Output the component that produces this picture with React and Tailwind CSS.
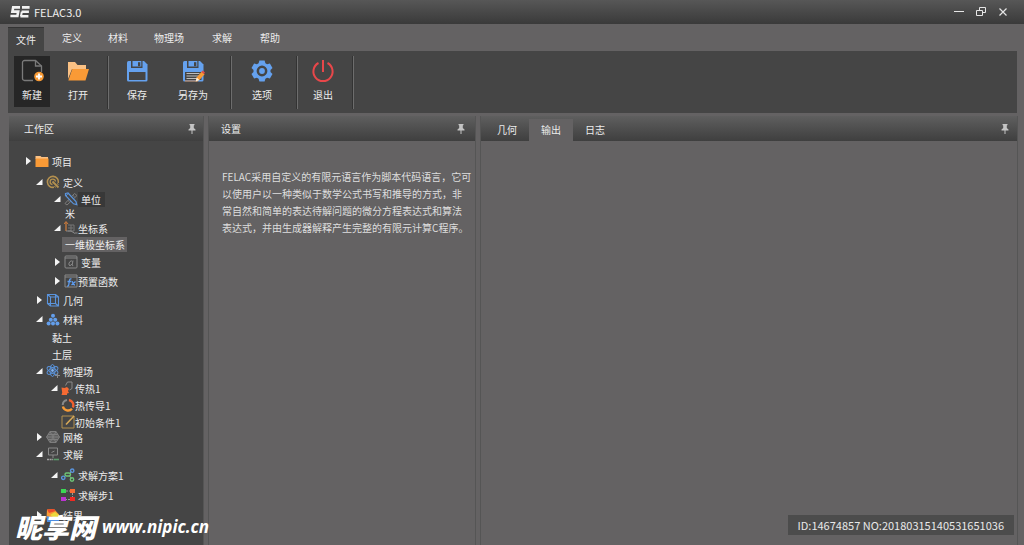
import { useState } from 'react';

/* ---------- Window chrome ---------- */

const Logo = () => (
  <svg viewBox="0 0 20 12" className="h-3 w-5" fill="none" stroke="#f2f2f2" strokeWidth="2.6">
    <path d="M10 1.4H3.2L2.4 5.6h5.8L7.4 10H0.4" />
    <path d="M19.6 1.4H12M18.9 5.8H11.6M18.4 10.2H10.4" />
    <path d="M11.8 5.8l-.8 4.4" strokeWidth="2" />
  </svg>
);

const TitleBar = () => (
  <header className="flex h-6 shrink-0 items-center bg-linear-to-b from-[#575757] to-[#3a3a3a] pr-4 pl-2.5">
    <Logo />
    <h1 className="ml-1 text-[11px] text-[#f0f0f0]">FELAC3.0</h1>
    <div className="ml-auto flex items-center gap-3">
      <button type="button" aria-label="最小化">
        <svg viewBox="0 0 10 10" className="size-2.5" stroke="#e6e6e6" fill="none">
          <path d="M0 4.5h10" />
        </svg>
      </button>
      <button type="button" aria-label="还原">
        <svg viewBox="0 0 10 10" className="size-2.5" stroke="#e6e6e6" fill="none">
          <path d="M3.5 3V.5h6v5H7M.5 3.5h6v5h-6z" />
        </svg>
      </button>
      <button type="button" aria-label="关闭">
        <svg viewBox="0 0 10 10" className="size-2.5" stroke="#e6e6e6" strokeWidth="1.2" fill="none">
          <path d="M1.5 1.5l7 7M8.5 1.5l-7 7" />
        </svg>
      </button>
    </div>
  </header>
);

/* ---------- Ribbon ---------- */

const NewFileIcon = () => (
  <svg viewBox="0 0 24 24" className="size-6" fill="none">
    <path d="M13 21.5H4.500a2 2 0 0 1-2-2v-16a2 2 0 0 1 2-2h11l6 5.500v6" stroke="#7a7a7a" strokeWidth="1.300" />
    <path d="M15.500 1.500v5.500h6" stroke="#7a7a7a" strokeWidth="1.300" />
    <circle cx="19" cy="17.500" r="4.800" fill="#f79a35" />
    <path d="M19 14.500v6M16 17.500h6" stroke="#fff" strokeWidth="1.800" />
  </svg>
);

const OpenIcon = () => (
  <svg viewBox="0 0 24 24" className="size-6">
    <path d="M2 20V3h7l2.500 3H20v4H6z" fill="#fbc184" />
    <path d="M6.300 10H23l-3.500 11.500H2.300z" fill="#f99a36" />
  </svg>
);

const Floppy = ({ children }) => (
  <svg viewBox="0 0 24 24" className="size-6" fill="none">
    <path d="M3.500 2h15.500l3.500 3.500v15.500a1.500 1.500 0 0 1-1.500 1.500H3.500A1.500 1.500 0 0 1 2 21V3.500A1.500 1.500 0 0 1 3.500 2z" fill="#65a1ee" />
    <path d="M6 2h11.500v7H6z" fill="#454545" />
    <path d="M7.500 2h8.800v5.500H7.500z" fill="#65a1ee" />
    <path d="M13 3.200h2.300v4H13z" fill="#454545" />
    <path d="M4 13h16.500v8H4z" fill="#454545" />
    {children}
  </svg>
);

const SaveAsIcon = () => (
  <Floppy>
    <path d="M5.500 14.500h13M5.500 17h13M5.500 19.500h13" stroke="#bdbdbd" strokeWidth="1.200" />
    <path d="M4 22h13" stroke="#b77c4b" strokeWidth="1.200" />
    <path d="M14.800 22.500l.8-4 5-5.800 3 2.500-5.200 5.800z" fill="#f79a35" />
    <path d="M20.300 13l1.400-1.600 2.300 2-1.200 1.700z" fill="#e64b43" />
    <path d="M14.800 22.500l.8-4 2.800 2.500z" fill="#fff1dc" />
  </Floppy>
);

const GearIcon = () => (
  <svg viewBox="0 0 24 24" className="size-6" fill="#65a1ee">
    <path
      fillRule="evenodd"
      d="M9.400 1.500h5.200l.8 2.700 1.700 1 2.800-.7 2.600 4.400-2 2v2.200l2 2-2.600 4.400-2.800-.7-1.700 1-.8 2.700H9.400l-.8-2.700-1.700-1-2.800.7-2.600-4.400 2-2v-2.200l-2-2 2.600-4.400 2.800.7 1.700-1zM12 6.600a5.400 5.400 0 1 0 0 10.800 5.400 5.400 0 0 0 0-10.800z"
    />
    <circle cx="12" cy="12" r="2.900" />
  </svg>
);

const PowerIcon = () => (
  <svg viewBox="0 0 24 24" className="size-6" fill="none" stroke="#e8474a" strokeWidth="2">
    <path d="M7.500 4a9.600 9.600 0 1 0 9 0M12 1v12" />
  </svg>
);

const MENU = ['文件', '定义', '材料', '物理场', '求解', '帮助'];

const MenuTabs = () => {
  const [active, setActive] = useState('文件');

  return (
    <nav className="flex h-[27px] shrink-0 items-end gap-2.5 px-2">
      {MENU.map((name) => (
        <button
          key={name}
          type="button"
          onClick={() => setActive(name)}
          className={`h-6 px-2 ${
            active === name ? 'border-t border-[#333] bg-[#454545]' : 'border-t border-transparent pb-1'
          } ${name === '求解' ? 'mx-0.5' : ''}`}
        >
          {name}
        </button>
      ))}
    </nav>
  );
};

const Tool = ({ label, icon, active }) => (
  <button
    type="button"
    className={`flex h-[51px] min-w-9 flex-col items-center gap-1 pt-[3px] ${active ? 'bg-[#262626]' : ''}`}
  >
    {icon}
    <span>{label}</span>
  </button>
);

const Divider = () => <span className="h-[53px] w-0.5 border-l border-[#333] bg-[#6d6d6d]" />;

const Ribbon = () => (
  <div className="mr-[7px] ml-2 flex h-[62px] shrink-0 items-start bg-[#454545] pt-[5px] pl-1.5">
    <div className="flex gap-2.5">
      <Tool label="新建" icon={<NewFileIcon />} active />
      <Tool label="打开" icon={<OpenIcon />} />
    </div>
    <div className="ml-[11px] flex gap-2.5">
      <Divider />
      <div className="flex gap-5">
        <Tool label="保存" icon={<Floppy />} />
        <Tool label="另存为" icon={<SaveAsIcon />} />
      </div>
    </div>
    <div className="ml-[19px] flex gap-3">
      <Divider />
      <Tool label="选项" icon={<GearIcon />} />
    </div>
    <div className="ml-4 flex gap-[7px]">
      <Divider />
      <Tool label="退出" icon={<PowerIcon />} />
    </div>
    <div className="ml-[11px] flex">
      <Divider />
    </div>
  </div>
);

/* ---------- Panels ---------- */

const Pin = () => (
  <button type="button" aria-label="固定" className="ml-auto">
    <svg viewBox="0 0 8 10" className="h-2.5 w-2" fill="#c4c4c4">
      <path d="M1.500 0h5v1L5.800 1.500v2.500L7.500 5.500V6.500H.5V5.500L2.200 4V1.500L1.500 1zM3.500 6.500h1V10h-1z" />
    </svg>
  </button>
);

const PanelHeader = ({ children }) => (
  <div className="flex h-[25px] shrink-0 items-center bg-linear-to-b from-[#5f5f5f] to-[#3f3f3f]">
    {children}
    <Pin />
  </div>
);

/* ---------- Tree icons, all on a 14px grid ---------- */

const Svg = ({ children }) => (
  <svg viewBox="0 0 14 14" className="size-3.5 shrink-0" fill="none">
    {children}
  </svg>
);

const ICONS = {
  folder: (
    <Svg>
      <path d="M.5 3V2h5l1 1h6.500v2H.5z" fill="#fbc184" />
      <path d="M.5 4.500h13V13H.5z" fill="#f99a36" />
    </Svg>
  ),
  define: (
    <Svg>
      <path d="M8 12.300A5.500 5.500 0 1 1 12.300 8" stroke="#b3904f" strokeWidth="1.600" />
      <path d="M6.500 9.500A2.700 2.700 0 1 1 9.500 6.500" stroke="#b3904f" strokeWidth="1.300" />
      <path d="M6.500 6.500l6 6" stroke="#b3904f" strokeWidth="1.800" />
      <path d="M11 8.500l1.500 1M8.500 11l1 1.500" stroke="#b3904f" />
    </Svg>
  ),
  unit: (
    <Svg>
      <path d="M1 11.500l9.500-10 2.500 2-10 9.500z" stroke="#7c7c7c" />
      <path d="M4 8.500l1.500 1.300M9 3.500l1.500 1.300" stroke="#7c7c7c" />
      <path d="M1.500 1.500l2.500-.5 8 8.500.8 3.200-3.300-.9-8-8.300z" fill="#454545" stroke="#5a94dd" strokeWidth="1.200" />
      <path d="M4 1.500L2 4" stroke="#5a94dd" />
    </Svg>
  ),
  axes: (
    <Svg>
      <path d="M4 4h6v6H4M7 4v6M4 7h5" stroke="#777" />
      <path d="M2 1v9" stroke="#c97a3c" strokeWidth="1.300" />
      <path d="M0 3l2-2.500L4 3" stroke="#c97a3c" />
      <path d="M2 10h5l4 2.500M11 12h2.500" stroke="#8a8a8a" />
    </Svg>
  ),
  variable: (
    <Svg>
      <rect x="1" y="1" width="12" height="12" rx="1" stroke="#8a8a8a" />
      <path d="M1 3h12" stroke="#8a8a8a" />
      <path d="M9 5.500L8.200 10q0 1 1 .5M8.700 7Q7.500 5 6 6.500t-1 3.500 3-1" stroke="#8a8a8a" />
    </Svg>
  ),
  func: (
    <Svg>
      <path d="M1 13V1h12v12z" stroke="#8a8a8a" />
      <path d="M1 3h12" stroke="#8a8a8a" />
      <path d="M7.500 5q-1.700-.7-2 1.500l-.8 4.500q-.3 1.500-1.700 1M3.500 7.500H7M7.500 7.500q1.200 0 1.500 1.700t2 1.800M11.500 7.500l-4 3.500" stroke="#5e9df0" strokeWidth="1.300" />
    </Svg>
  ),
  cube: (
    <Svg>
      <path d="M1.500 1.500h8v9h-8zM4.500 4h8v9h-8zM1.500 1.500l3 2.500M9.500 1.500l3 2.500M9.500 10.500l3 2.500M1.500 10.500l3 2.500" stroke="#5a94dd" strokeWidth="1.100" />
    </Svg>
  ),
  balls: (
    <Svg>
      <g fill="#639eeb">
        <circle cx="7" cy="3.800" r="2" />
        <circle cx="4.800" cy="7.700" r="2" />
        <circle cx="9.200" cy="7.700" r="2" />
        <circle cx="2.600" cy="11.600" r="2" />
        <circle cx="7" cy="11.600" r="2" />
        <circle cx="11.400" cy="11.600" r="2" />
      </g>
    </Svg>
  ),
  atom: (
    <Svg>
      <g stroke="#5a94dd">
        <ellipse cx="6.500" cy="6.500" rx="6" ry="2.500" transform="rotate(30 6.500 6.500)" />
        <ellipse cx="6.500" cy="6.500" rx="6" ry="2.500" transform="rotate(90 6.500 6.500)" />
        <ellipse cx="6.500" cy="6.500" rx="6" ry="2.500" transform="rotate(150 6.500 6.500)" />
      </g>
      <circle cx="6.500" cy="6.500" r="1.400" fill="#7db2f5" />
      <path d="M11.500 9v5M9 11.500h5" stroke="#8a8a8a" />
    </Svg>
  ),
  heat: (
    <Svg>
      <path d="M4.500 4.500l2-3.500H11v6.500L8.500 9" stroke="#8a8a8a" />
      <path d="M.5 6.500l3 .5 2.500-1 2 2-1 2 1 2-2 .5V14H.5l.7-2.500z" fill="#f56a33" />
    </Svg>
  ),
  ring: (
    <Svg>
      <path d="M6 2A5.300 5.300 0 0 0 1.700 7" stroke="#8a8a8a" strokeWidth="2" />
      <path d="M8 2A5.300 5.300 0 0 1 11.800 9.500" stroke="#f2602f" strokeWidth="2.400" />
      <path d="M11 10.700A5.300 5.300 0 0 1 1.900 8.500" stroke="#f79a35" strokeWidth="2.400" />
    </Svg>
  ),
  edit: (
    <Svg>
      <path d="M1 1h12v12H1z" stroke="#b3904f" />
      <path d="M5 9.500l8-8.500" stroke="#d9aa58" strokeWidth="1.500" />
    </Svg>
  ),
  mesh: (
    <Svg>
      <path d="M4 1.500h6l3.500 5.500-3.500 5.500H4L.5 7z" fill="#606060" stroke="#7e7e7e" />
      <path d="M.5 7h13M4 1.500l6 11M10 1.500l-6 11M2 4.500h10M2 9.500h10" stroke="#7e7e7e" />
    </Svg>
  ),
  solve: (
    <Svg>
      <path d="M2.500 1h9v7h-9zM7 8v3M5.500 5.500L8.500 4" stroke="#8a8a8a" />
      <path d="M1 12.500h6" stroke="#a5a5a5" strokeWidth="1.600" strokeDasharray="2 .6" />
      <path d="M7.500 12.500H13" stroke="#5d9b6b" strokeWidth="1.600" />
    </Svg>
  ),
  scheme: (
    <Svg>
      <path d="M3 9l2-2M9 5l1.500-1.500M8.500 8l2 2.500" stroke="#999" />
      <circle cx="11.200" cy="2.700" r="1.700" stroke="#5a94dd" strokeWidth="1.400" />
      <circle cx="2.300" cy="9.800" r="1.700" stroke="#5a94dd" strokeWidth="1.400" />
      <rect x="4" y="5" width="5.500" height="3" rx="1.500" stroke="#6dc476" strokeWidth="1.400" />
      <circle cx="11" cy="11.500" r="1.700" stroke="#6dc476" strokeWidth="1.400" />
    </Svg>
  ),
  step: (
    <Svg>
      <path d="M5 3h4M11.500 5v4M9 11.500H5" stroke="#999" strokeDasharray="2 1" />
      <path d="M0 1h5v4H0z" fill="#3bd755" />
      <path d="M9 1h5v4H9z" fill="#f56a33" />
      <path d="M0 9h5v4H0z" fill="#bb33d2" />
      <path d="M9 9h5v4H9z" fill="#ee2a22" />
    </Svg>
  ),
  result: (
    <Svg>
      <path d="M1 1.500L8 1l5 5.500V13L5.500 9.500.5 10z" fill="#f79a35" />
      <path d="M1 1.500L8 1l1.500 2L3 5z" fill="#ec4a2b" />
      <path d="M4 7l5-3 4 3v3L7 9z" fill="#ecd83c" />
      <path d="M.5 8l4 1 8.500 3v2H1z" fill="#4e8de0" />
    </Svg>
  ),
};

const Arrow = ({ open }) => (
  <svg viewBox="0 0 7 8" className="h-2 w-[7px] shrink-0" fill="#f4f4f4">
    {open ? <path d="M6.500 1v6H0z" /> : <path d="M1 0l5 4-5 4z" />}
  </svg>
);

// open: true / false draws the arrow, undefined leaves its place empty
const TREE = [
  { label: '项目', icon: 'folder', open: false, row: 'h-[22px] pl-4' },
  { label: '定义', icon: 'define', open: true, row: 'h-5 pl-[27px]' },
  { label: '单位', icon: 'unit', open: true, row: 'h-3.5 pl-[45px]', mark: 'bg-[#383838] pr-1' },
  { label: '米', row: 'h-3.5 pl-[53px]' },
  { label: '坐标系', icon: 'axes', open: true, row: 'h-4 pl-[45px]', tight: true },
  { label: '一维极坐标系', row: 'h-4 pl-[53px]', mark: 'bg-[#646263] pr-0.5' },
  { label: '变量', icon: 'variable', open: false, row: 'h-5 pl-[45px]' },
  { label: '预置函数', icon: 'func', open: false, row: 'h-[18px] pl-[45px]', tight: true },
  { label: '几何', icon: 'cube', open: false, row: 'h-5 pl-[27px]' },
  { label: '材料', icon: 'balls', open: true, row: 'h-[18px] pl-[27px]' },
  { label: '黏土', row: 'h-[18px] pl-[40px]' },
  { label: '土层', row: 'h-4 pl-[40px]' },
  { label: '物理场', icon: 'atom', open: true, row: 'h-[18px] pl-[27px]' },
  { label: '传热1', icon: 'heat', open: true, row: 'h-4 pl-[42px]', tight: true },
  { label: '热传导1', icon: 'ring', row: 'h-[18px] pl-[42px]', tight: true },
  { label: '初始条件1', icon: 'edit', row: 'h-4 pl-[42px]', tight: true },
  { label: '网格', icon: 'mesh', open: false, row: 'h-3.5 pl-[27px]' },
  { label: '求解', icon: 'solve', open: true, row: 'h-5 pl-[27px]' },
  { label: '求解方案1', icon: 'scheme', open: true, row: 'h-[22px] pl-[42px]' },
  { label: '求解步1', icon: 'step', row: 'h-[18px] pl-[42px]' },
  { label: '结果', icon: 'result', open: false, row: 'h-[22px] pl-[27px]' },
];

const TreeRow = ({ label, icon, open, row, mark = '', tight }) => (
  <li className={`flex items-center ${row}`}>
    {icon && (
      <span className="flex items-center gap-[3px]">
        {open === undefined ? <span className="w-[7px]" /> : <Arrow open={open} />}
        {ICONS[icon]}
      </span>
    )}
    <span className={`leading-[15px] ${tight ? '' : 'pl-[3px]'} ${mark}`}>{label}</span>
  </li>
);

const Workspace = () => (
  <aside className="flex w-[195px] shrink-0 flex-col border-r border-[#555] bg-[#454545]">
    <PanelHeader>
      <h2 className="pl-[15px]">工作区</h2>
      <span className="order-last w-[7px]" />
    </PanelHeader>
    <ul className="pt-[9px]">
      {TREE.map((node) => (
        <TreeRow key={node.label + node.row} {...node} />
      ))}
    </ul>
  </aside>
);

const Settings = () => (
  <section className="flex w-[268px] shrink-0 flex-col border-x border-[#555]">
    <PanelHeader>
      <h2 className="pl-3">设置</h2>
      <span className="order-last w-2.5" />
    </PanelHeader>
    <p className="pt-[27px] pl-[13px] leading-[17px] whitespace-nowrap text-[#dedede]">
      FELAC采用自定义的有限元语言作为脚本代码语言，它可
      <br />
      以使用户以一种类似于数学公式书写和推导的方式，非
      <br />
      常自然和简单的表达待解问题的微分方程表达式和算法
      <br />
      表达式，并由生成器解释产生完整的有限元计算C程序。
    </p>
  </section>
);

const OUTPUT_TABS = ['几何', '输出', '日志'];

const Output = () => {
  const [active, setActive] = useState('输出');

  return (
    <section className="flex flex-1 flex-col border-x border-[#555]">
      <PanelHeader>
        <div className="flex self-stretch pt-[3px] pl-1">
          {OUTPUT_TABS.map((name) => (
            <button
              key={name}
              type="button"
              onClick={() => setActive(name)}
              className={`w-11 ${active === name ? 'bg-[#646263]' : ''}`}
            >
              {name}
            </button>
          ))}
        </div>
        <span className="order-last w-2" />
      </PanelHeader>
    </section>
  );
};

/* ---------- Watermark ---------- */

const Watermark = () => (
  <>
    <div className="absolute bottom-0 left-[15px] flex items-center gap-1.5 pb-1 text-white italic">
      <span className="text-[27px] leading-7 font-black">昵享网</span>
      <span className="font-['Open_Sans',sans-serif] text-[17px] leading-7 font-bold">www.nipic.cn</span>
    </div>
    <div className="absolute right-2.5 bottom-2.5 bg-[#4c4c4c] px-2.5 text-[11px] leading-5 text-[#e8e8e8]">
      ID:14674857 NO:20180315140531651036
    </div>
  </>
);

export default function App() {
  return (
    <div className="relative flex h-screen flex-col overflow-hidden bg-[#646263] font-['Noto_Sans_CJK_SC',sans-serif] text-[10px] leading-4 text-[#ececec]">
      <TitleBar />
      <MenuTabs />
      <Ribbon />
      <main className="mt-[3px] mr-1.5 ml-[9px] flex min-h-0 flex-1 gap-1">
        <Workspace />
        <Settings />
        <Output />
      </main>
      <Watermark />
    </div>
  );
}
